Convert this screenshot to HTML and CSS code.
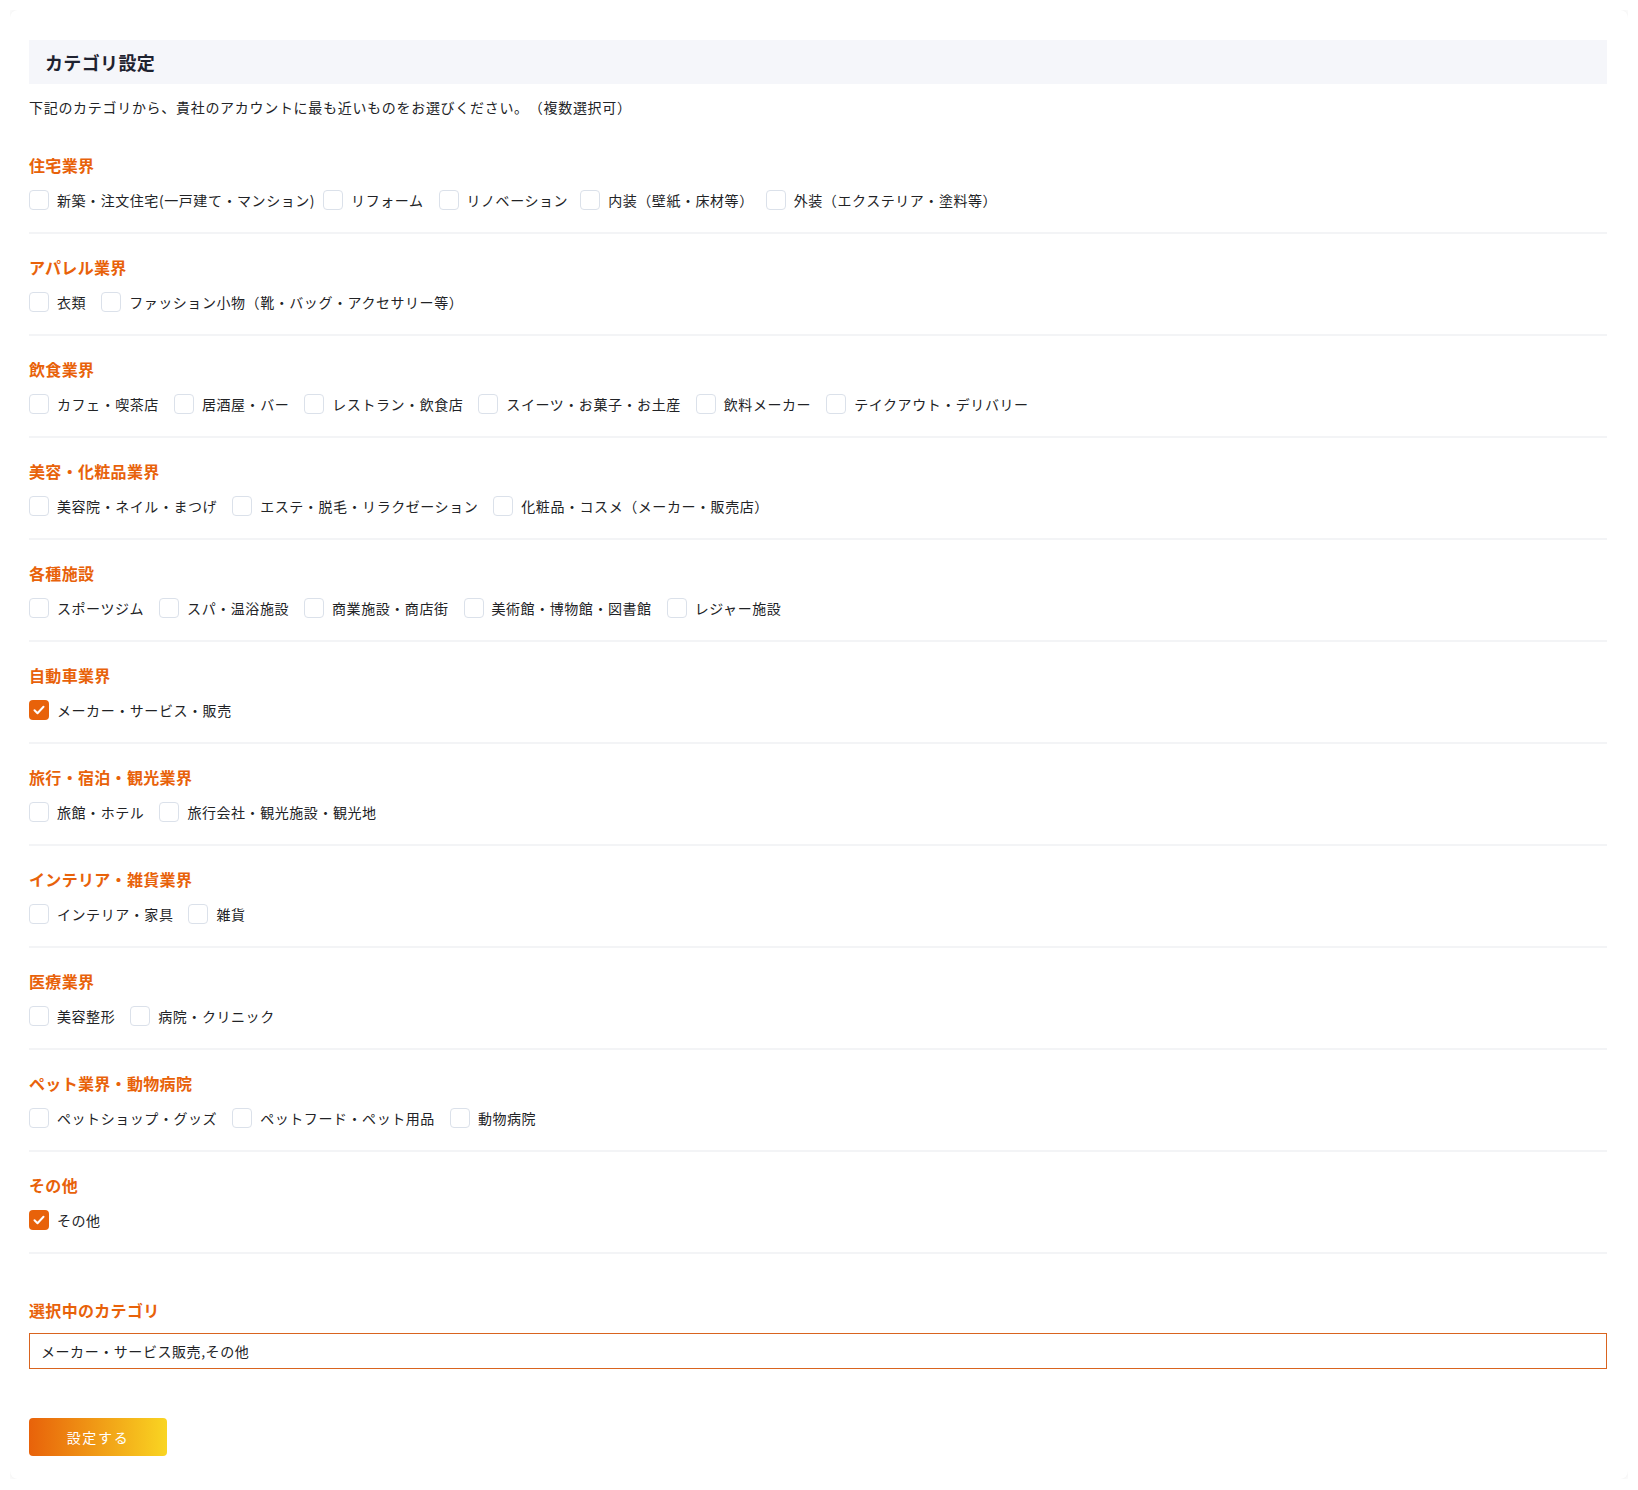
FILE: index.html
```html
<!DOCTYPE html>
<html lang="ja">
<head>
<meta charset="utf-8">
<title>カテゴリ設定</title>
<link rel="stylesheet" href="styles.css">
</head>
<body>
<div class="card">
  <h1 class="title">カテゴリ設定</h1>
  <p class="desc">下記のカテゴリから、貴社のアカウントに最も近いものをお選びください。（複数選択可）</p>

  <section class="group">
    <h2 class="group-title">住宅業界</h2>
    <div class="options">
      <label class="opt opt-tight"><span class="box"></span><span class="txt">新築・注文住宅(一戸建て・マンション)</span></label>
      <label class="opt"><span class="box"></span><span class="txt">リフォーム</span></label>
      <label class="opt opt-tight2"><span class="box"></span><span class="txt">リノベーション</span></label>
      <label class="opt opt-tight2"><span class="box"></span><span class="txt">内装（壁紙・床材等）</span></label>
      <label class="opt"><span class="box"></span><span class="txt">外装（エクステリア・塗料等）</span></label>
    </div>
  </section>

  <section class="group">
    <h2 class="group-title">アパレル業界</h2>
    <div class="options">
      <label class="opt"><span class="box"></span><span class="txt">衣類</span></label>
      <label class="opt"><span class="box"></span><span class="txt">ファッション小物（靴・バッグ・アクセサリー等）</span></label>
    </div>
  </section>

  <section class="group">
    <h2 class="group-title">飲食業界</h2>
    <div class="options">
      <label class="opt"><span class="box"></span><span class="txt">カフェ・喫茶店</span></label>
      <label class="opt"><span class="box"></span><span class="txt">居酒屋・バー</span></label>
      <label class="opt"><span class="box"></span><span class="txt">レストラン・飲食店</span></label>
      <label class="opt"><span class="box"></span><span class="txt">スイーツ・お菓子・お土産</span></label>
      <label class="opt"><span class="box"></span><span class="txt">飲料メーカー</span></label>
      <label class="opt"><span class="box"></span><span class="txt">テイクアウト・デリバリー</span></label>
    </div>
  </section>

  <section class="group">
    <h2 class="group-title">美容・化粧品業界</h2>
    <div class="options">
      <label class="opt"><span class="box"></span><span class="txt">美容院・ネイル・まつげ</span></label>
      <label class="opt"><span class="box"></span><span class="txt">エステ・脱毛・リラクゼーション</span></label>
      <label class="opt"><span class="box"></span><span class="txt">化粧品・コスメ（メーカー・販売店）</span></label>
    </div>
  </section>

  <section class="group">
    <h2 class="group-title">各種施設</h2>
    <div class="options">
      <label class="opt"><span class="box"></span><span class="txt">スポーツジム</span></label>
      <label class="opt"><span class="box"></span><span class="txt">スパ・温浴施設</span></label>
      <label class="opt"><span class="box"></span><span class="txt">商業施設・商店街</span></label>
      <label class="opt"><span class="box"></span><span class="txt">美術館・博物館・図書館</span></label>
      <label class="opt"><span class="box"></span><span class="txt">レジャー施設</span></label>
    </div>
  </section>

  <section class="group">
    <h2 class="group-title">自動車業界</h2>
    <div class="options">
      <label class="opt"><span class="box checked"><svg viewBox="0 0 20 20" width="20" height="20"><path d="M5.5 10.2l3 3 6-6.4" fill="none" stroke="#fff" stroke-width="2" stroke-linecap="round" stroke-linejoin="round"/></svg></span><span class="txt">メーカー・サービス・販売</span></label>
    </div>
  </section>

  <section class="group">
    <h2 class="group-title">旅行・宿泊・観光業界</h2>
    <div class="options">
      <label class="opt"><span class="box"></span><span class="txt">旅館・ホテル</span></label>
      <label class="opt"><span class="box"></span><span class="txt">旅行会社・観光施設・観光地</span></label>
    </div>
  </section>

  <section class="group">
    <h2 class="group-title">インテリア・雑貨業界</h2>
    <div class="options">
      <label class="opt"><span class="box"></span><span class="txt">インテリア・家具</span></label>
      <label class="opt"><span class="box"></span><span class="txt">雑貨</span></label>
    </div>
  </section>

  <section class="group">
    <h2 class="group-title">医療業界</h2>
    <div class="options">
      <label class="opt"><span class="box"></span><span class="txt">美容整形</span></label>
      <label class="opt"><span class="box"></span><span class="txt">病院・クリニック</span></label>
    </div>
  </section>

  <section class="group">
    <h2 class="group-title">ペット業界・動物病院</h2>
    <div class="options">
      <label class="opt"><span class="box"></span><span class="txt">ペットショップ・グッズ</span></label>
      <label class="opt"><span class="box"></span><span class="txt">ペットフード・ペット用品</span></label>
      <label class="opt"><span class="box"></span><span class="txt">動物病院</span></label>
    </div>
  </section>

  <section class="group">
    <h2 class="group-title">その他</h2>
    <div class="options">
      <label class="opt"><span class="box checked"><svg viewBox="0 0 20 20" width="20" height="20"><path d="M5.5 10.2l3 3 6-6.4" fill="none" stroke="#fff" stroke-width="2" stroke-linecap="round" stroke-linejoin="round"/></svg></span><span class="txt">その他</span></label>
    </div>
  </section>

  <div class="selected">
    <h2 class="group-title">選択中のカテゴリ</h2>
    <div class="selected-field">メーカー・サービス販売,その他</div>
  </div>

  <button class="submit" type="button">設定する</button>
</div>
</body>
</html>
```

FILE: styles.css
```css
* { box-sizing: border-box; }

html, body {
  background: #ffffff;
}

body {
  margin: 10px;
  font-family: "Noto Sans CJK JP", "Noto Sans", sans-serif;
  color: #222326;
  text-spacing-trim: space-all;
}

.card {
  background: #ffffff;
  border-radius: 8px;
  box-shadow: 0 0 9px rgba(0, 0, 0, 0.09);
  padding: 30px 21px 23px 19px;
}

.title {
  margin: 0;
  height: 44px;
  line-height: 44px;
  padding: 0 16px;
  background: #f5f6fa;
  font-size: 18px;
  font-weight: 700;
  color: #1e2230;
  letter-spacing: 0.02em;
}

.desc {
  margin: 13px 0 15px;
  font-size: 14px;
  line-height: 20px;
  letter-spacing: 0.05em;
  color: #222326;
}

.group {
  padding: 22px 0 20px;
  border-bottom: 2px solid #f3f4f6;
}

.group-title {
  margin: 0 0 12px;
  font-size: 16px;
  line-height: 22px;
  font-weight: 700;
  color: #e8620a;
  letter-spacing: 0.02em;
}

.options {
  display: flex;
  flex-wrap: wrap;
  align-items: center;
  height: 24px;
}

.opt {
  display: flex;
  align-items: center;
  gap: 8px;
  margin-right: 15px;
  font-size: 14px;
  line-height: 24px;
  letter-spacing: 0.04em;
  color: #222326;
}

.opt-tight {
  margin-right: 8px;
}

.opt-tight2 {
  margin-right: 12px;
}

.box {
  width: 20px;
  height: 20px;
  border: 1.5px solid #dbe1ea;
  border-radius: 4px;
  background: #ffffff;
  flex: none;
  display: flex;
  align-items: center;
  justify-content: center;
}

.box.checked {
  border: none;
  background: #e8620a;
}

.box svg {
  display: block;
}

.selected {
  margin-top: 45px;
}

.selected-field {
  height: 36px;
  line-height: 34px;
  border: 1px solid #d9641f;
  padding: 0 11px;
  font-size: 14px;
  letter-spacing: 0.04em;
  color: #222326;
}

.submit {
  display: block;
  margin-top: 49px;
  width: 138px;
  height: 38px;
  border: none;
  border-radius: 4px;
  background: linear-gradient(90deg, #e8620a 0%, #f9d522 100%);
  color: #ffffff;
  font-family: "Noto Sans CJK JP", "Noto Sans", sans-serif;
  font-size: 14px;
  letter-spacing: 0.12em;
  padding: 0;
}
```
